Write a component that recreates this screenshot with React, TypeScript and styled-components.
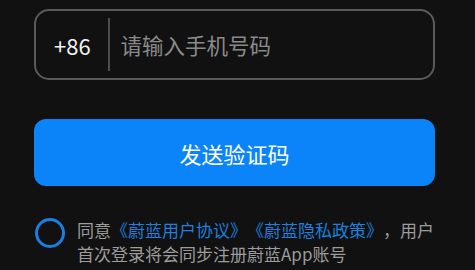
import React from "react";
import styled, { createGlobalStyle } from "styled-components";

const Global = createGlobalStyle`
  html, body { margin: 0; padding: 0; background: #111111; }
  body { font-family: "Noto Sans CJK SC", "Noto Sans", sans-serif; }
`;

const Page = styled.div`
  width: 475px;
  height: 270px;
  overflow: hidden;
  box-sizing: border-box;
  padding: 9px 40px 0 34px;
  display: flex;
  flex-direction: column;
  background: #111111;
`;

const PhoneBox = styled.div`
  height: 71px;
  box-sizing: border-box;
  border: 2px solid #5a5a5a;
  border-radius: 15px;
  display: flex;
  align-items: center;
  padding-left: 18px;
`;

const Code = styled.span`
  color: #f2f2f2;
  font-size: 22px;
  line-height: 1;
  width: 36px;
`;

const Divider = styled.div`
  width: 1.5px;
  height: 53px;
  background: #4e4e4e;
  margin: 0 11px 0 18px;
`;

const Placeholder = styled.span`
  color: #8a8a8a;
  font-size: 21.5px;
  line-height: 1;
`;

const SendButton = styled.div`
  margin-top: 39px;
  height: 67px;
  border-radius: 12px;
  background: #0a84f8;
  color: #ffffff;
  font-size: 22px;
  display: flex;
  align-items: center;
  justify-content: center;
`;

const Agreement = styled.div`
  margin-top: 32px;
  display: flex;
  align-items: flex-start;
`;

const Radio = styled.div`
  flex: none;
  width: 30px;
  height: 30px;
  box-sizing: border-box;
  border: 3px solid #1a7fe0;
  border-radius: 50%;
  margin-left: 1px;
  margin-right: 12px;
`;

const Text = styled.p`
  margin: 0;
  width: 362px;
  color: #9c9c9c;
  font-size: 17px;
  line-height: 24px;
  text-spacing-trim: space-all;
  font-feature-settings: "halt" 0, "palt" 0;
`;

const Link = styled.span`
  color: #1f7fdc;
`;

export default function App() {
  return (
    <>
      <Global />
      <Page>
        <PhoneBox>
          <Code>+86</Code>
          <Divider />
          <Placeholder>请输入手机号码</Placeholder>
        </PhoneBox>
        <SendButton>发送验证码</SendButton>
        <Agreement>
          <Radio />
          <Text>
            同意<Link>《蔚蓝用户协议》《蔚蓝隐私政策》</Link>，用户首次登录将会同步注册蔚蓝App账号
          </Text>
        </Agreement>
      </Page>
    </>
  );
}
